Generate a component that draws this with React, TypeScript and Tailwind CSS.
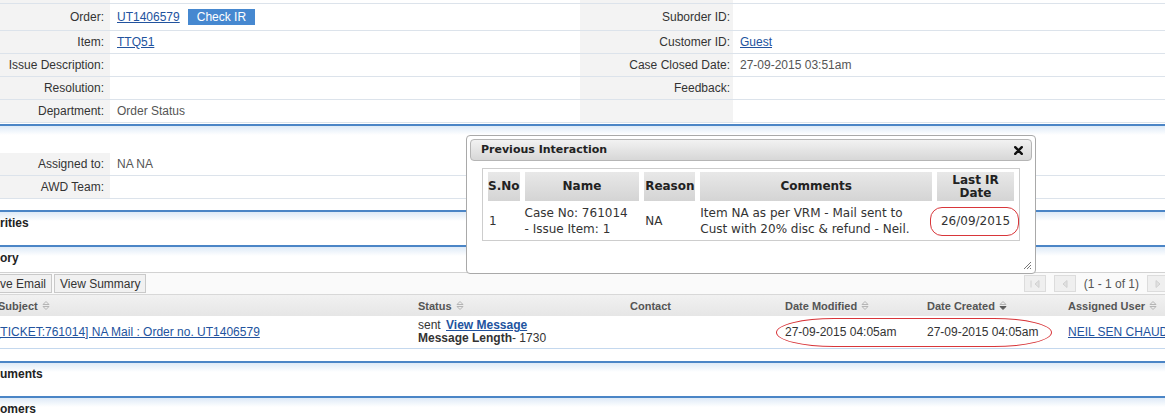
import React from 'react';

const link = 'text-[#22539e] underline';

function SortIcon({ active = false }: { active?: boolean }) {
  return (
    <svg width="8" height="11" viewBox="0 0 8 11" className="inline-block ml-[4px] align-[-1px]">
      <path d="M1 4.5 L4 1.5 L7 4.5 Z" fill="none" stroke="#b4b4b4" strokeWidth="1" />
      <path d="M1 6.5 L4 9.5 L7 6.5 Z" fill={active ? '#5a5a5a' : 'none'} stroke={active ? '#5a5a5a' : '#b4b4b4'} strokeWidth="1" />
    </svg>
  );
}

interface RowProps {
  l1?: string;
  v1?: React.ReactNode;
  l2?: string;
  v2?: React.ReactNode;
  h?: string;
}

function Row({ l1, v1, l2, v2, h = 'h-[23px]' }: RowProps) {
  return (
    <div className={`flex ${h} border-b border-[#dce3eb]`}>
      <div className="w-[110px] shrink-0 bg-[#f3f3f3] flex items-center justify-end pr-[6px] text-[#333]">{l1}</div>
      <div className="w-[470px] shrink-0 flex items-center pl-[7px] text-[#555]">{v1}</div>
      <div className="w-[153px] shrink-0 bg-[#f3f3f3] flex items-center justify-end pr-[3px] text-[#333]">{l2}</div>
      <div className="flex-1 flex items-center pl-[7px] text-[#555]">{v2}</div>
    </div>
  );
}

function Section({ title, last = false }: { title: string; last?: boolean }) {
  return (
    <div
      className={`border-t-2 border-[#4b85c6] bg-[linear-gradient(#deeaf7,#ffffff_9px)] ${last ? 'h-[40px]' : 'h-[35px]'} pt-[3px] leading-[16px] font-bold text-[12px] text-[#222]`}
    >
      {title}
    </div>
  );
}

function PageBox({ children }: { children?: React.ReactNode }) {
  return (
    <div className="w-[22px] h-[17px] shrink-0 bg-[#efefef] border border-[#dcdcdc] flex items-center justify-center">{children}</div>
  );
}

export default function App() {
  return (
    <div className="relative w-[1165px] h-[417px] overflow-hidden bg-white font-['Liberation_Sans',Arial,sans-serif] text-[12px] leading-[14px]">
      {/* case details */}
      <div className="flex h-[3px] border-b border-[#dce3eb] box-content">
        <div className="w-[110px] bg-[#f3f3f3]" />
        <div className="w-[470px]" />
        <div className="w-[153px] bg-[#f3f3f3]" />
      </div>
      <Row
        h="h-[27px]"
        l1="Order:"
        v1={
          <>
            <span className={link}>UT1406579</span>
            <span className="ml-[8px] h-[16px] px-[9px] bg-[#4688d0] text-white flex items-center">Check IR</span>
          </>
        }
        l2="Suborder ID:"
      />
      <Row l1="Item:" v1={<span className={link}>TTQ51</span>} l2="Customer ID:" v2={<span className={link}>Guest</span>} />
      <Row l1="Issue Description:" l2="Case Closed Date:" v2="27-09-2015 03:51am" />
      <Row l1="Resolution:" l2="Feedback:" />
      <Row l1="Department:" v1="Order Status" />

      <div className="mt-[1px] h-[29px] border-t-2 border-[#4b85c6] bg-[linear-gradient(#deeaf7,#ffffff_9px)]" />
      <Row l1="Assigned to:" v1="NA NA" />
      <Row l1="AWD Team:" />
      <div className="h-[11px]" />

      <Section title="rities" />
      <div className="border-t-2 border-[#4b85c6] bg-[linear-gradient(#deeaf7,#ffffff_9px)] h-[22px] pt-[3px] leading-[16px] font-bold text-[#222] border-b border-b-[#d2d2d2] box-content">
        ory
      </div>

      {/* toolbar */}
      <div className="h-[21px] flex items-center justify-between bg-[#fafafa]">
        <div className="flex gap-[2px] text-[#333]">
          <div className="h-[19px] pr-[5px] flex items-center bg-[#f1f1f1] border border-l-0 border-[#c9c9c9]">ve Email</div>
          <div className="h-[19px] px-[5px] flex items-center bg-[#f1f1f1] border border-[#c9c9c9]">View Summary</div>
        </div>
        <div className="flex items-center gap-[8px] text-[#555] -mr-[4px]">
          <PageBox>
            <svg width="12" height="8" viewBox="0 0 12 8">
              <path d="M2 0.5 V7.5 M6 4 L10 0.5 V7.5 Z" stroke="#d0d0d0" fill="#e0e0e0" />
            </svg>
          </PageBox>
          <PageBox>
            <svg width="6" height="8" viewBox="0 0 6 8">
              <path d="M5 0.5 V7.5 L1 4 Z" stroke="#d0d0d0" fill="#e0e0e0" />
            </svg>
          </PageBox>
          <span className="text-[12px] whitespace-nowrap">(1 - 1 of 1)</span>
          <PageBox>
            <svg width="6" height="8" viewBox="0 0 6 8">
              <path d="M1 0.5 V7.5 L5 4 Z" stroke="#d0d0d0" fill="#e0e0e0" />
            </svg>
          </PageBox>
        </div>
      </div>

      {/* grid */}
      <div className="h-[21px] flex items-center border-t border-[#d8d8d8] bg-[linear-gradient(#f1f1f1,#e6e6e6)] font-bold text-[11px] text-[#555] box-content">
        <div className="w-[418px] shrink-0 -ml-[2px] pr-[2px] box-content">Subject<SortIcon /></div>
        <div className="w-[212px] shrink-0">Status<SortIcon /></div>
        <div className="w-[155px] shrink-0">Contact</div>
        <div className="w-[142px] shrink-0">Date Modified<SortIcon /></div>
        <div className="w-[141px] shrink-0">Date Created<SortIcon active /></div>
        <div className="shrink-0 whitespace-nowrap">Assigned User<SortIcon /></div>
      </div>
      <div className="h-[32px] flex items-center border-b border-[#c4d8ee] text-[#333] box-content">
        <div className="w-[418px] shrink-0 -ml-[3px] pr-[3px] box-content whitespace-nowrap">
          <span className={link}>[TICKET:761014] NA Mail : Order no. UT1406579</span>
        </div>
        <div className="w-[212px] shrink-0 leading-[13px]">
          <div>
            sent <span className={`${link} font-bold ml-[2px]`}>View Message</span>
          </div>
          <div>
            <span className="font-bold">Message Length</span>- 1730
          </div>
        </div>
        <div className="w-[155px] shrink-0" />
        <div className="w-[142px] shrink-0">27-09-2015 04:05am</div>
        <div className="w-[141px] shrink-0">27-09-2015 04:05am</div>
        <div className="shrink-0 whitespace-nowrap">
          <span className={link}>NEIL SEN CHAUDHURI</span>
        </div>
      </div>
      <div className="h-[12px]" />

      <Section title="uments" />
      <Section title="omers" last />

      <div className="absolute left-[776px] top-[318px] w-[276px] h-[29px] border border-[#d8363a] rounded-[60px/15px]" />

      {/* dialog */}
      <div className="absolute left-[466px] top-[135px] w-[570px] h-[139px] bg-white border border-[#a9a9a9] rounded-[4px] p-[3px] font-['DejaVu_Sans',Verdana,sans-serif]">
        <div className="h-[22px] flex items-center justify-between pl-[10px] pr-[8px] border border-[#b5b5b5] rounded-[4px] bg-[linear-gradient(#f2f2f2,#d7d7d7)]">
          <span className="text-[11px] font-bold text-[#222]">Previous Interaction</span>
          <svg width="9" height="9" viewBox="0 0 9 9">
            <path d="M1.2 1.2 L7.8 7.8 M7.8 1.2 L1.2 7.8" stroke="#111" strokeWidth="2.4" strokeLinecap="round" />
          </svg>
        </div>
        <div className="ml-[12px] mt-[7px] w-[538px] border border-[#cdcdcd]">
          <table className="border-separate border-spacing-x-[5px] border-spacing-y-[3px] text-[12px] text-[#333]">
            <thead>
              <tr className="h-[29px] text-[#222] font-bold leading-[13px]">
                <th className="w-[31px] bg-[linear-gradient(#e8e8e8,#d4d4d4)]">S.No</th>
                <th className="w-[115px] bg-[linear-gradient(#e8e8e8,#d4d4d4)]">Name</th>
                <th className="w-[51px] bg-[linear-gradient(#e8e8e8,#d4d4d4)]">Reason</th>
                <th className="w-[232px] bg-[linear-gradient(#e8e8e8,#d4d4d4)]">Comments</th>
                <th className="w-[77px] bg-[linear-gradient(#e8e8e8,#d4d4d4)]">
                  Last IR
                  <br />
                  Date
                </th>
              </tr>
            </thead>
            <tbody>
              <tr className="h-[33px] leading-[16px] align-middle">
                <td className="pl-[1px]">1</td>
                <td className="whitespace-nowrap">
                  Case No: 761014
                  <br />- Issue Item: 1
                </td>
                <td className="pl-[1px]">NA</td>
                <td className="whitespace-nowrap">
                  Item NA as per VRM - Mail sent to
                  <br />
                  Cust with 20% disc &amp; refund - Neil.
                </td>
                <td className="text-center">26/09/2015</td>
              </tr>
            </tbody>
          </table>
        </div>
        <div className="absolute left-[463px] top-[71px] w-[89px] h-[29px] border border-[#d8363a] rounded-[12px]" />
        <svg className="absolute right-[3px] bottom-[3px]" width="10" height="10" viewBox="0 0 10 10">
          <path d="M9 2 L2 9 M9 5 L5 9 M9 8 L8 9" stroke="#777" strokeWidth="1" />
        </svg>
      </div>
    </div>
  );
}
